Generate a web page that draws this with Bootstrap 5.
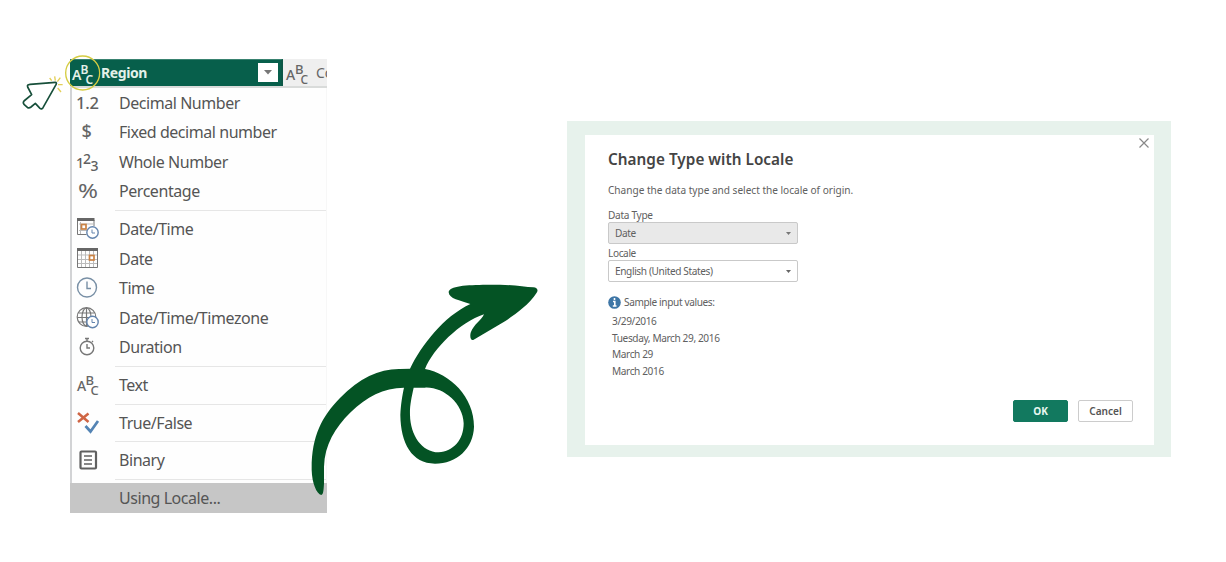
<!DOCTYPE html>
<html lang="en">
<head>
    <meta charset="UTF-8">
    <title>Change Type with Locale</title>
    <link rel="stylesheet" href="https://cdn.jsdelivr.net/npm/bootstrap@5.3.0/dist/css/bootstrap.min.css">
    <style>
        body { font-family: "Noto Sans", "Open Sans", sans-serif; color: #555; height: 562px; overflow: hidden; background: #fff; }
        svg { display: block; overflow: visible; }
        .type-panel { width: 257px; margin: 59px 0 0 70px; }
        .col-head { height: 29px; background: #efefef; border-bottom: 2px solid #d9dbda; }
        .col-active { width: 213px; background: #075f4b; color: #e3f1e9; border-top: 1px solid #398270; border-right: 2px solid #0d5746; font-size: 14px; font-weight: 700; letter-spacing: -.4px; line-height: 20px; padding-bottom: 1px; height: 27px; }
        .drop-btn { width: 20px; height: 19px; background: #fff; margin-right: 3px; }
        .col-next { font-size: 14px; color: #666; }
        .type-list { border-left: 2px solid #d2d3d5; background: #fefefe; border-right: 1px solid #f7f7f7; }
        .type-row { height: 29.55px; font-size: 16px; letter-spacing: -.45px; line-height: 28px; white-space: nowrap; }
        .type-icon { width: 47px; padding-left: 4px; flex: none; letter-spacing: 0; }
        .type-sep { height: 8.15px; padding: 4px 0 0 43px; }
        .type-sep div { height: 1px; background: #e6e6e6; }
        .type-using { background: #c6c6c6; margin-left: -2px; padding-left: 2px; margin-right: -1px; }
        .dialog-frame { width: 604px; height: 336px; background: #e7f2ec; margin: 121px 0 0 240px; padding: 14px 17px 12px 18px; }
        .dialog-box { height: 310px; background: #fff; padding: 15px 21px 23px 23px; font-size: 10.1px; letter-spacing: -.38px; line-height: 14px; color: #606060; }
        .dialog-title { font-size: 15.3px; font-weight: 600; letter-spacing: .03px; line-height: 18px; color: #444; margin: 0; }
        .close-icon { margin: -12px -16px 0 0; }
        .dialog-text { margin-top: 15px; letter-spacing: -.02px; }
        .pick { width: 190px; height: 22px; border: 1px solid #c9c9c9; border-radius: 2px; padding: 0 6px; flex: none; }
        .pick-off { background: #e9e9e9; }
        .first-label { margin-top: 11px; letter-spacing: -.3px; }
        .pick-label { margin-top: 2px; }
        .sample-head { margin-top: 13px; gap: 3px; }
        .samples { padding-left: 4px; line-height: 16.5px; margin-top: 4px; }
        .dlg-actions { gap: 10px; }
        .dlg-btn { width: 55px; height: 22px; border-radius: 2px; padding: 0 0 1px; font-size: 10.1px; font-weight: 600; letter-spacing: 0; line-height: 18px; }
        .dlg-ok { background: #12795f; border-color: #12795f; color: #e7f7ef; font-weight: 700; }
        .dlg-cancel { border-color: #ccc; color: #555; background: #fff; }
        .pointer { left: 10px; top: 45px; }
        .swoosh { left: 300px; top: 270px; }
    </style>
    <script src="https://cdn.jsdelivr.net/npm/bootstrap@5.3.0/dist/js/bootstrap.bundle.min.js"></script>
</head>
<body class="position-relative">
    <div class="d-flex align-items-start">
        <div class="type-panel flex-shrink-0">
            <div class="col-head d-flex overflow-hidden">
                <div class="col-active d-flex align-items-center flex-shrink-0">
                    <svg width="31" height="26" viewBox="0 0 31 26" fill="currentColor" font-size="14" font-weight="600">
                        <text x="2" y="20">A</text><text x="10.500" y="14" font-size="12">B</text><text x="15.500" y="24" font-size="12">C</text>
                    </svg>
                    <span>Region</span>
                    <div class="drop-btn ms-auto d-flex align-items-center justify-content-center">
                        <svg width="8" height="5" viewBox="0 0 8 5"><path d="M0 0h8L4 4.500z" fill="#777"/></svg>
                    </div>
                </div>
                <div class="col-next d-flex align-items-center flex-shrink-0">
                    <svg width="33" height="26" viewBox="0 0 33 26" fill="#666" font-size="14" font-weight="500">
                        <text x="3" y="20">A</text><text x="12" y="14" font-size="13">B</text><text x="17.500" y="24" font-size="12">C</text>
                    </svg>
                    <span>Co</span>
                </div>
            </div>
            <div class="type-list">
                <div class="type-row d-flex align-items-center">
                    <div class="type-icon"><svg width="26" height="26" fill="#606060"><text x="0" y="19" font-size="16.500" font-weight="500" textLength="23">1.2</text></svg></div>
                    <span>Decimal Number</span>
                </div>
                <div class="type-row d-flex align-items-center">
                    <div class="type-icon"><svg width="26" height="26" fill="#666"><text x="5.500" y="19" font-size="18" font-weight="500">$</text></svg></div>
                    <span>Fixed decimal number</span>
                </div>
                <div class="type-row d-flex align-items-center">
                    <div class="type-icon"><svg width="26" height="26" fill="#606060" font-weight="500"><text x="0" y="19" font-size="14">1</text><text x="7" y="15" font-size="14">2</text><text x="14.500" y="22" font-size="14">3</text></svg></div>
                    <span>Whole Number</span>
                </div>
                <div class="type-row d-flex align-items-center">
                    <div class="type-icon"><svg width="26" height="26" fill="#666"><text x="2" y="20" font-size="20" textLength="20" lengthAdjust="spacingAndGlyphs">%</text></svg></div>
                    <span>Percentage</span>
                </div>
                <div class="type-sep"><div></div></div>
                <div class="type-row d-flex align-items-center">
                    <div class="type-icon">
                        <svg width="26" height="26" fill="none">
                            <path d="M1.500 4v14.500h9M18 4v6" stroke="#777"/><path d="M1 3.500h17.500" stroke="#666" stroke-width="3"/>
                            <path d="M3 8h14M3 14.500h8M4.500 6v12" stroke="#bbb"/><rect x="5.500" y="8.500" width="4.500" height="4.500" stroke="#c98244" stroke-width="1.700"/>
                            <circle cx="16.500" cy="16.500" r="5.700" fill="#fff" stroke="#6485ae" stroke-width="1.400"/><path d="M16 13.500v3.500h3" stroke="#6485ae"/>
                        </svg>
                    </div>
                    <span>Date/Time</span>
                </div>
                <div class="type-row d-flex align-items-center">
                    <div class="type-icon">
                        <svg width="26" height="26" fill="none">
                            <path d="M5.500 5v16M9.500 5v16M13.500 5v16M17.500 5v16M1 9h21M1 13.500h21M1 17.500h21" stroke="#bbb"/>
                            <path d="M1.500 3v18.500h20V3" stroke="#777"/><path d="M1 3.500h21" stroke="#666" stroke-width="3"/>
                            <rect x="13.500" y="9.500" width="4.500" height="4.500" fill="#fff" stroke="#c98244" stroke-width="1.700"/>
                        </svg>
                    </div>
                    <span>Date</span>
                </div>
                <div class="type-row d-flex align-items-center">
                    <div class="type-icon"><svg width="26" height="26" fill="none"><circle cx="11" cy="12.500" r="9.500" stroke="#788fa5" stroke-width="1.400"/><path d="M11 6.500v7h4" stroke="#788fa5" stroke-width="1.400"/></svg></div>
                    <span>Time</span>
                </div>
                <div class="type-row d-flex align-items-center">
                    <div class="type-icon">
                        <svg width="26" height="26" fill="none">
                            <g stroke="#777" stroke-width="1.200"><circle cx="10.500" cy="12" r="9.300"/><ellipse cx="10.500" cy="12" rx="4.500" ry="9"/><path d="M10.500 3v18M2.500 8h16M1.500 12.500h18M2.500 17h16"/></g>
                            <circle cx="16.500" cy="17" r="5.700" fill="#fff" stroke="#6485ae" stroke-width="1.400"/><path d="M16 14v3.500h3" stroke="#6485ae"/>
                        </svg>
                    </div>
                    <span>Date/Time/Timezone</span>
                </div>
                <div class="type-row d-flex align-items-center">
                    <div class="type-icon"><svg width="26" height="26" fill="none" stroke="#777" stroke-width="1.400"><circle cx="11" cy="14" r="6.800"/><path d="M9 4.500h4M11 5v2M11 10v4h3M16 8l1-1"/></svg></div>
                    <span>Duration</span>
                </div>
                <div class="type-sep"><div></div></div>
                <div class="type-row d-flex align-items-center">
                    <div class="type-icon"><svg width="26" height="26" fill="#666" font-size="14" font-weight="500"><text x="1" y="19">A</text><text x="9.500" y="13" font-size="13">B</text><text x="14.500" y="23" font-size="13">C</text></svg></div>
                    <span>Text</span>
                </div>
                <div class="type-sep"><div></div></div>
                <div class="type-row d-flex align-items-center">
                    <div class="type-icon"><svg width="26" height="26" fill="none"><path d="M2 3l10.500 9M12.500 3.500L2 12" stroke="#cf6544" stroke-width="2.500"/><path d="M9.500 16l5 5.500L22 11" stroke="#5484b4" stroke-width="2.700"/></svg></div>
                    <span>True/False</span>
                </div>
                <div class="type-sep"><div></div></div>
                <div class="type-row d-flex align-items-center">
                    <div class="type-icon"><svg width="26" height="26" fill="none" stroke="#606060"><rect x="4.500" y="4.500" width="15.500" height="17" rx="1" stroke-width="2.200"/><path d="M8 9h8M8 13h8M8 17h8" stroke-width="1.700"/></svg></div>
                    <span>Binary</span>
                </div>
                <div class="type-sep"><div></div></div>
                <div class="type-row type-using d-flex align-items-center">
                    <div class="type-icon"></div>
                    <span>Using Locale...</span>
                </div>
            </div>
        </div>

        <div class="dialog-frame flex-shrink-0">
            <div class="dialog-box d-flex flex-column">
                <div class="d-flex justify-content-between align-items-start">
                    <h1 class="dialog-title">Change Type with Locale</h1>
                    <svg class="close-icon" width="10" height="10" viewBox="0 0 10 10"><path d="M.5.5l9 9M9.500.5l-9 9" stroke="#888" stroke-width="1.200"/></svg>
                </div>
                <div class="dialog-text">Change the data type and select the locale of origin.</div>
                <label class="first-label">Data Type</label>
                <div class="pick pick-off d-flex align-items-center justify-content-between">
                    <span>Date</span><svg width="5" height="3" viewBox="0 0 5 3"><path d="M0 0h5L2.500 3z" fill="#777"/></svg>
                </div>
                <label class="pick-label">Locale</label>
                <div class="pick d-flex align-items-center justify-content-between">
                    <span>English (United States)</span><svg width="5" height="3" viewBox="0 0 5 3"><path d="M0 0h5L2.500 3z" fill="#666"/></svg>
                </div>
                <div class="sample-head d-flex align-items-center">
                    <svg width="13" height="13" viewBox="0 0 13 13"><circle cx="6.500" cy="6.500" r="6.300" fill="#3e76a6"/><path d="M6.500 2v2M5 5.500h1.800V10M4.800 10h3.700" stroke="#fff" stroke-width="1.600" fill="none"/></svg>
                    <span>Sample input values:</span>
                </div>
                <div class="samples">
                    <div>3/29/2016</div>
                    <div>Tuesday, March 29, 2016</div>
                    <div>March 29</div>
                    <div>March 2016</div>
                </div>
                <div class="d-flex justify-content-end mt-auto dlg-actions">
                    <button class="btn dlg-btn dlg-ok">OK</button>
                    <button class="btn dlg-btn dlg-cancel">Cancel</button>
                </div>
            </div>
        </div>
    </div>

    <!-- pointer and highlight ring over the column type icon -->
    <svg class="pointer position-absolute" width="100" height="70" viewBox="0 0 300 210" fill="none">
        <path d="M136 112L60 118Q50 119 53 126L65 149L42 168Q38 172 42 178L53 188Q58 190 63 186L76 175L90 190Q95 194 99 188L138 119Q141 112 136 112z" fill="#fff" stroke="#174f3a" stroke-width="5" stroke-linejoin="round"/>
        <path d="M119 99l6 8M134 94l2 13M151 98l-9 12M144 119h14M143 129l10 12" stroke="#e3cf57" stroke-width="4"/>
        <ellipse cx="218" cy="84" rx="51" ry="51" stroke="#d5cc42" stroke-width="4"/>
    </svg>

    <!-- looped arrow from the menu to the dialog -->
    <svg class="swoosh position-absolute" width="250" height="235" viewBox="0 0 750 705">
        <path fill="#045324" fill-rule="evenodd" d="M64 675C50 672 36 640 35 600C34 500 65 440 120 384C180 323 238 296 300 297L330 296C365 225 430 140 511 102C480 91 447 87 446 67C447 47 500 45 560 44L600 44C640 45 675 51 700 52C711 53 716 60 710 68C685 108 640 135 615 154L521 209C512 213 509 200 512 188C522 162 544 151 552 133C480 157 400 235 375 297C450 311 522 380 522 470C520 535 470 581 405 581C335 580 302 520 301 435C302 405 307 375 312 353C250 353 200 380 152 427C105 473 74 525 72 590L72 640C71 660 70 674 64 675zM341 353C334 385 329 408 330 435C331 495 365 547 416 547C460 544 491 510 491 460C489 400 430 350 375 353z"/>
    </svg>
</body>
</html>
